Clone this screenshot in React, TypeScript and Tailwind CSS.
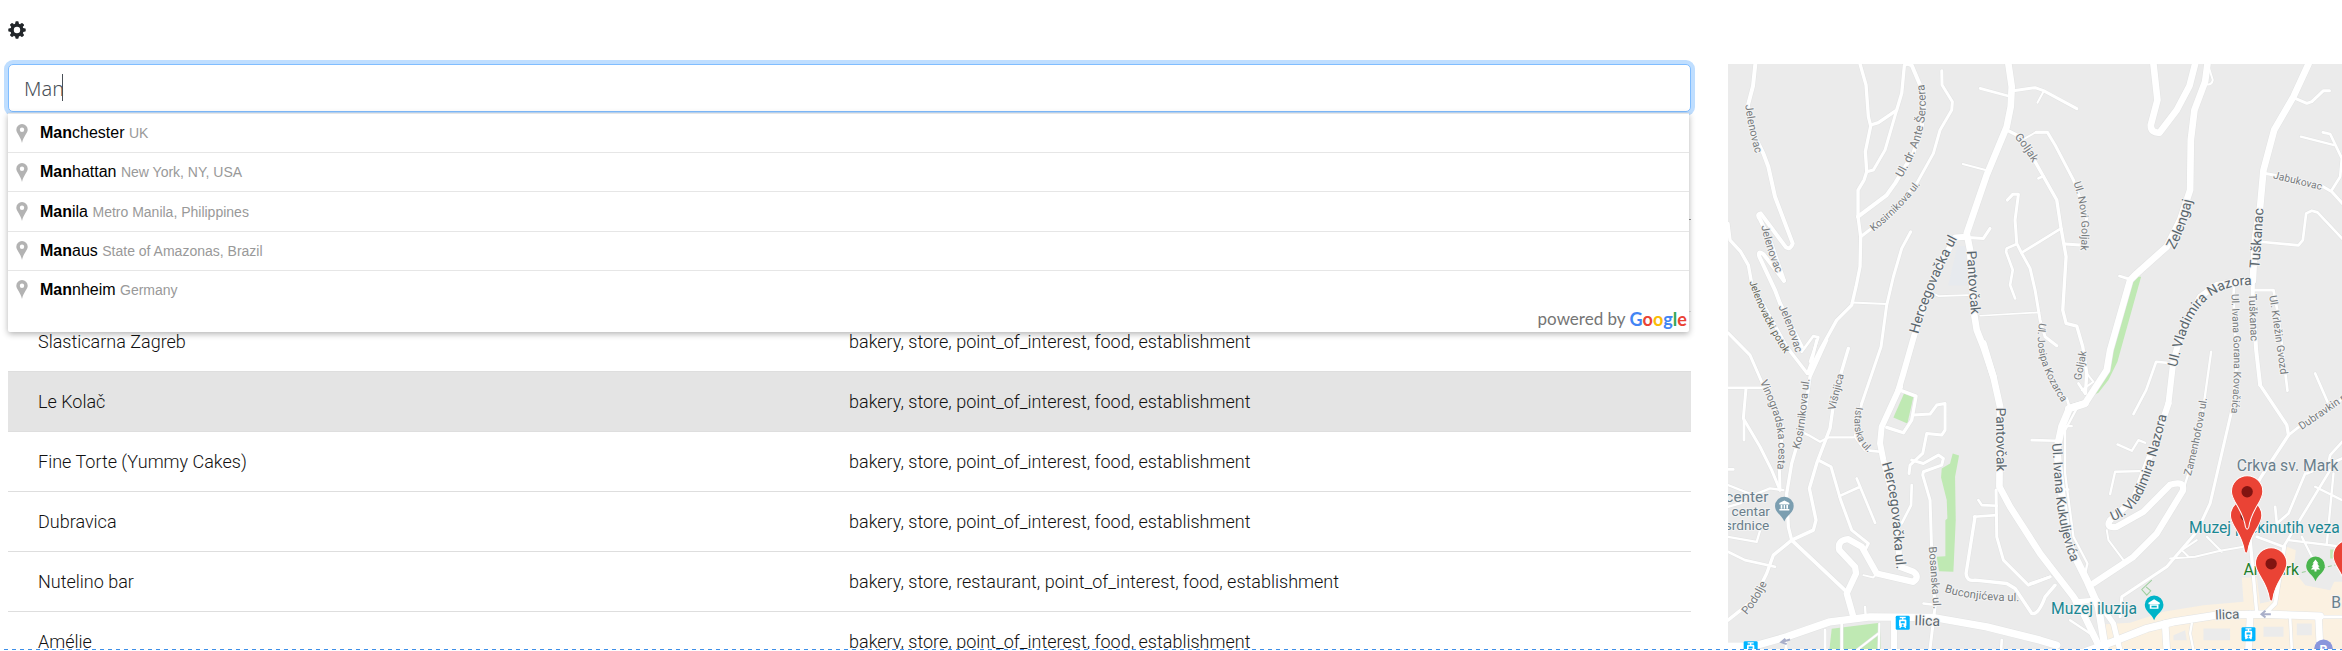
import React from "react";

type Prediction = { main: string; rest: string };

const query = "Man";

const predictions: Prediction[] = [
  { main: "Manchester", rest: "UK" },
  { main: "Manhattan", rest: "New York, NY, USA" },
  { main: "Manila", rest: "Metro Manila, Philippines" },
  { main: "Manaus", rest: "State of Amazonas, Brazil" },
  { main: "Mannheim", rest: "Germany" },
];

type Place = { name: string; types: string; hovered?: boolean };

const places: Place[] = [
  { name: "Slasticarna Zagreb", types: "bakery, store, point_of_interest, food, establishment" },
  { name: "Le Kolač", types: "bakery, store, point_of_interest, food, establishment", hovered: true },
  { name: "Fine Torte (Yummy Cakes)", types: "bakery, store, point_of_interest, food, establishment" },
  { name: "Dubravica", types: "bakery, store, point_of_interest, food, establishment" },
  { name: "Nutelino bar", types: "bakery, store, restaurant, point_of_interest, food, establishment" },
  { name: "Amélie", types: "bakery, store, point_of_interest, food, establishment" },
];

const cogAngles = [0, 45, 90, 135, 180, 225, 270, 315];

function CogIcon() {
  return (
    <svg viewBox="-9 -9 18 18" className="size-[18px]" aria-hidden="true">
      <circle r="4.900" className="fill-none stroke-[#212529]" strokeWidth="3.400" />
      {cogAngles.map((angle) => (
        <path
          key={angle}
          transform={`rotate(${angle})`}
          className="fill-[#212529]"
          d="M-2 -6L-1.500 -8.300Q-1.400 -8.700 -1 -8.700H1Q1.400 -8.700 1.500 -8.300L2 -6Z"
        />
      ))}
    </svg>
  );
}

function PlaceIcon() {
  return (
    <svg viewBox="0 0 12 19" className="h-[19px] w-3 shrink-0 fill-[#b3b3b3]" aria-hidden="true">
      <path fillRule="evenodd" d="M6 0a5.7 5.7 0 0 1 5.7 5.7C11.700 9 7.500 12 6 19 4.500 12 .3 9 .3 5.700A5.700 5.700 0 0 1 6 0Zm0 3.500a2.200 2.200 0 1 0 0 4.400 2.200 2.200 0 0 0 0-4.400Z" />
    </svg>
  );
}

function Suggestions() {
  return (
    <div className="absolute left-0 right-[2px] top-[49px] z-10 rounded-b-[2px] bg-white font-['Liberation_Sans',Arial,sans-serif] shadow-[0_2px_6px_rgba(0,0,0,0.3)]">
      <ul className="flex h-[196px] flex-col">
        {predictions.map((p) => (
          <li key={p.main} className="flex flex-1 items-center border-t border-[#e6e6e6] pl-2">
            <PlaceIcon />
            <span className="ml-3 whitespace-nowrap text-[16px] leading-5 text-black">
              <b>{query}</b>
              {p.main.slice(query.length)} <span className="text-[14px] text-[#999]">{p.rest}</span>
            </span>
          </li>
        ))}
      </ul>
      <div className="flex h-[23px] items-center justify-end gap-1 pb-1 pr-[2px] font-[Lato,sans-serif] text-[17px] leading-4">
        <span className="text-[#757575]">powered by</span>
        <span className="text-[18px] font-bold">
          <span className="text-[#4285f4]">G</span>
          <span className="text-[#ea4335]">o</span>
          <span className="text-[#fbbc05]">o</span>
          <span className="text-[#4285f4]">g</span>
          <span className="text-[#34a853]">l</span>
          <span className="text-[#ea4335]">e</span>
        </span>
      </div>
    </div>
  );
}

type Tile = 0 | 1 | 2 | 3;
const tileOffset: Record<Tile, string> = {
  0: "translate(0 0)",
  1: "translate(930 0)",
  2: "translate(0 870)",
  3: "translate(930 870)",
};

type Road = [Tile, number, string];

const roads: Road[] = [
  [0, 12, "M106 42L99 108L84 165L95 240L130 310L145 350L165 440L218 580Q212 600 198 592L122 490Q108 492 120 508L150 570L192 692"],
  [0, 12, "M192 692L130 612Q112 600 118 620L165 720L180 760L245 890"],
  [0, 10, "M24 520L30 570L62 605L85 645L95 700L200 890L262 970"],
  [0, 10, "M420 42L438 105L445 200L452 228L436 305L440 365L432 390L414 420L414 500L422 560L420 650L408 710L395 765L350 810L300 900L265 970"],
  [0, 10, "M562 42L553 46L545 130L530 180L475 218L452 225"],
  [0, 9, "M530 180L495 300L460 360L440 365"],
  [0, 12, "M565 42L575 46L600 105L612 160L605 230L580 310L525 400L500 435L414 500"],
  [0, 9, "M665 62L666 105L697 155L695 180L660 240L640 310L590 400L500 500L422 560"],
  [0, 20, "M865 42L875 110L872 170L860 230L800 375L740 550L750 600L762 790L770 840L790 890L820 980"],
  [0, 18, "M740 560L705 562L690 590L640 690L590 830L550 970L535 1020"],
  [0, 8, "M780 115L865 138"],
  [0, 9, "M880 122L945 113L970 122L1070 176"],
  [0, 6, "M970 125L952 158"],
  [0, 6, "M728 342L805 362"],
  [0, 9, "M745 562L790 565L810 535"],
  [0, 10, "M860 240L890 255L945 335L1010 450L1023 535L1038 620L1028 780L1038 820L1070 828L1088 890L1100 970L1096 1030"],
  [0, 9, "M862 450L878 433L895 433L885 510L890 580L905 610L930 655L945 720L960 810L975 860L1010 887"],
  [0, 8, "M890 582L860 595L858 605L878 660L870 705L885 745"],
  [0, 8, "M905 608L1023 535"],
  [0, 9, "M572 545L545 595L520 680L500 765L483 890L425 1060"],
  [0, 6, "M395 757L500 762"],
  [0, 5, "M640 730L655 738L745 735"],
  [0, 5, "M780 797L958 787"],
  [0, 8, "M245 905L280 858L295 862L270 935"],
  [0, 6, "M905 270L945 248L982 247"],
  [1, 9, "M18 247L52 247L75 285L130 390L170 500L160 575L150 585L105 582"],
  [1, 8, "M25 385L40 378"],
  [1, 20, "M370 42L382 150L362 225Q362 250 388 248L440 180L478 108L495 42"],
  [1, 20, "M532 42L525 95L493 180L482 270L480 420L450 510L410 590L320 670L300 690L240 900L230 960L165 1060L115 1075"],
  [1, 6, "M536 52L548 90Q545 105 530 103"],
  [1, 8, "M268 678L300 688"],
  [1, 20, "M835 42L790 140L732 240L700 360L690 470L675 560L668 692"],
  [1, 9, "M795 145L830 160L845 155L880 122L898 122"],
  [1, 7, "M812 260L912 285"],
  [1, 8, "M878 247L900 252L935 325L930 380L905 420"],
  [1, 9, "M705 370L730 375L870 405L905 425L950 475"],
  [1, 8, "M690 575L805 586L818 570L828 490L845 482L862 487L945 575"],
  [1, 18, "M668 692L620 694L560 705L510 740L460 830L430 930L415 1060"],
  [1, 12, "M668 690L668 730L678 900L690 1005"],
  [1, 8, "M675 720L730 720L745 800L772 1022"],
  [1, 8, "M612 700L610 740L620 950L605 1080"],
  [2, 9, "M24 -22L90 45L125 125L188 260L178 380L180 450"],
  [2, 8, "M24 143L130 143"],
  [2, 9, "M78 145L70 235L120 320L155 390L180 450"],
  [2, 8, "M72 240L72 300"],
  [2, 10, "M320 0L270 110L250 250L215 370L200 460L205 560L215 600"],
  [2, 9, "M290 0L275 65L262 100"],
  [2, 10, "M385 25L345 160L330 265L290 370L268 445L288 540L280 570L215 600L160 645L140 700L100 780L24 840"],
  [2, 7, "M235 270L265 285L300 305L325 292L400 292"],
  [2, 8, "M425 190L405 290L435 330L480 335"],
  [2, 9, "M295 360L333 380L362 480L395 570L445 610L435 630"],
  [2, 8, "M358 468L420 440M410 415L465 548"],
  [2, 11, "M215 600L380 755"],
  [2, 19, "M400 830L380 760L408 700L405 680L358 630Q350 600 385 597L425 620L470 700L580 725Q600 710 580 695L540 680"],
  [2, 6, "M430 705L460 712L470 700"],
  [2, 18, "M540 140L485 260L480 310L490 360L525 500L540 680"],
  [2, 10, "M540 150L588 168L575 240L550 278L500 262"],
  [2, 9, "M580 225L630 222L650 195L675 190L675 270L665 285L620 280L608 340L570 375L567 400"],
  [2, 9, "M575 360L610 370L655 345L670 355L665 375L610 395L608 405L630 480L635 640L645 800L630 925"],
  [2, 8, "M575 435L573 495L545 550"],
  [2, 20, "M790 10L820 110L840 200L838 440L870 500L960 640L1060 770L1080 800L1140 925"],
  [2, 8, "M935 300L1010 302M775 480L785 495L830 497M762 530L830 525"],
  [2, 9, "M828 450L830 590L850 660L925 735L990 710"],
  [2, 10, "M765 530L738 700Q740 725 765 720L860 730L885 745L935 820Q955 825 975 770L1005 735"],
  [2, 7, "M610 790L650 795M435 800L437 830"],
  [2, 8, "M845 900L843 930M365 850L365 930M315 870L315 930M198 905L198 930"],
  [2, 18, "M522 840L522 930"],
  [2, 6, "M475 880L410 930M478 850L476 930"],
  [2, 8, "M24 635L75 660L165 680M24 388L40 388"],
  [2, 7, "M24 435L100 465L150 445L190 450M24 590L110 605L125 555M24 500L60 490L90 470"],
  [2, 22, "M24 918L100 918L200 890L330 845L450 830L640 832L800 860L960 900L1010 915"],
  [3, 8, "M310 222L348 150L378 65L410 68"],
  [3, 7, "M262 313L305 332L325 300L345 308M240 462L255 395L330 393"],
  [3, 19, "M415 190L385 280L340 400L310 480L240 540Q225 565 260 560L340 515L420 434Q465 420 458 452L380 580L310 650L190 730"],
  [3, 7, "M543 35L520 200L475 400L462 440"],
  [3, 9, "M605 210L540 490L500 575L410 680L275 770L270 830"],
  [3, 6, "M420 655L495 650L570 632L640 620M530 590L575 635M500 600L455 630L475 650"],
  [3, 10, "M690 135L770 255L775 285L690 415L660 470L660 600L680 820"],
  [3, 8, "M775 285L800 265L940 175M855 100L892 185"],
  [3, 22, "M165 190L118 205L95 260L80 330L95 460L115 610L170 720L205 800L225 925"],
  [3, 7, "M140 205L105 270L105 400L130 590L172 670L165 700M105 258L125 258M95 448L115 448"],
  [3, 8, "M110 175L118 200M145 130L165 160"],
  [3, 6, "M170 100L190 125L155 150"],
  [3, 16, "M135 785L200 780L250 850L268 925"],
  [3, 8, "M0 730L60 710"],
  [3, 7, "M120 840L180 880L205 920M485 850L480 880L490 930"],
  [3, 6, "M230 570L235 600L280 660"],
  [3, 8, "M680 590L760 620L900 390M825 400L775 520L740 550L735 500"],
  [3, 8, "M936 305L900 345L890 390M936 355L830 400"],
  [3, 7, "M855 440L936 480M910 400L890 610M775 600L936 620M815 590L845 650"],
  [3, 12, "M710 815L735 790L750 700L762 620"],
  [3, 20, "M405 850L410 930M660 822L655 930M865 830L870 930"],
  [3, 8, "M780 835L785 930M870 830L936 830"],
  [3, 22, "M150 940L240 908L350 865L430 845L560 825L700 822L870 828"],
];

const minor = "fill-[#777b7e]";
const major = "fill-[#5a666d]";

type Label = [Tile, string, string, number, string];

const labels: Label[] = [
  [0, "Jelenovac", "M76 165Q84 240 112 330", 33, minor],
  [0, "Jelenovac", "M124 528Q138 600 177 690", 33, minor],
  [0, "Jelenovac", "M175 770Q205 830 230 920", 33, minor],
  [0, "Jelenovački potok", "M88 695Q120 800 205 930", 30, "fill-[#606357]"],
  [0, "Ul. dr. Ante Šercera", "M546 384C600 290 635 200 608 80", 35, minor],
  [0, "Kosirnikova ul.", "M460 545Q550 475 610 390", 31, minor],
  [0, "Goljak", "M882 262Q910 290 950 360", 34, minor],
  [0, "Hercegovačka ul", "M595 852Q630 720 720 550", 42, major],
  [0, "Pantovčak", "M740 603Q745 700 755 820", 41, major],
  [1, "Ul. Novi Goljak", "M130 398Q165 500 150 610", 32, minor],
  [1, "Zelengaj", "M432 600Q472 530 492 420", 42, major],
  [1, "Tuškanac", "M687 655Q695 560 702 450", 42, major],
  [1, "Jabukovac", "M728 385L890 424", 31, minor],
  [1, "Ul. Vladimira Nazora", "M440 952C465 850 490 700 670 705", 41, major],
  [1, "Ul. Ivana Gorana Kovačića", "M604 732C606 850 622 960 598 1130", 31, minor],
  [1, "Tuškanac", "M656 732L664 920", 33, minor],
  [1, "Ul. Krležin Gvozd", "M717 738Q735 850 756 1010", 32, minor],
  [1, "Ul. Josipa Kozarca", "M28 818C10 900 40 980 115 1085", 31, minor],
  [2, "Vinogradska cesta", "M120 125C150 200 195 260 166 420", 33, minor],
  [2, "Kosirnikova ul.", "M238 328C262 250 255 190 274 85", 33, minor],
  [2, "Višnjica", "M345 212L374 92", 32, minor],
  [2, "Istarska ul.", "M408 200C396 270 405 310 460 350", 31, minor],
  [2, "Hercegovačka ul.", "M485 370C520 470 515 570 534 730", 42, major],
  [2, "Pantovčak", "M828 203L830 420", 41, major],
  [2, "Bosanska ul.", "M626 620L642 830", 33, minor],
  [2, "Buconjićeva ul.", "M673 755Q760 785 920 783", 34, minor],
  [2, "Podolje", "M80 825Q120 780 146 718", 34, minor],
  [2, "Ilica", "M583 855L690 859", 42, major],
  [3, "Goljak", "M153 122L172 20", 32, minor],
  [3, "Zamenhofova ul.", "M482 408Q512 300 532 165", 32, minor],
  [3, "Ul. Ivana Kukuljevića", "M66 310C75 430 72 560 145 720", 40, major],
  [3, "Ul. Vladimira Nazora", "M248 543C350 510 370 380 424 170", 41, major],
  [3, "Dubravkin put", "M815 270L990 150", 32, minor],
  [3, "Ilica", "M555 838L660 834", 40, major],
];

function Pin({ x, y }: { x: number; y: number }) {
  return (
    <g transform={`translate(${x} ${y})`}>
      <path
        className="fill-[#ea4335] stroke-white"
        strokeWidth="3"
        d="M0 -48A47 47 0 0 1 47 0C47 30 12 52 5 106Q0 118 -5 106C-12 52 -47 30 -47 0A47 47 0 0 1 0 -48Z"
      />
      <circle r="17" className="fill-[#811411]" />
    </g>
  );
}

function Tram({ x, y }: { x: number; y: number }) {
  return (
    <g transform={`translate(${x} ${y})`}>
      <rect x="-21" y="-21" width="42" height="42" rx="4" className="fill-[#00b5ff]" />
      <path className="fill-none stroke-white" strokeWidth="4" d="M-9 -16H9M0 -16V-9M-9 15L-5 10M9 15L5 10" />
      <path
        className="fill-white"
        fillRule="evenodd"
        d="M-8 -10H8Q11 -10 11 -6V8Q11 12 7 12H-7Q-11 12 -11 8V-6Q-11 -10 -8 -10ZM-6 -5V1H6V-5ZM0 4a3 3 0 1 0 .1 0Z"
      />
    </g>
  );
}

function Poi({ x, y, color, children }: { x: number; y: number; color: string; children: React.ReactNode }) {
  return (
    <g transform={`translate(${x} ${y})`}>
      <path className={color} d="M0 -28A28 28 0 0 1 28 0C28 20 8 26 0 46C-8 26 -28 20 -28 0A28 28 0 0 1 0 -28Z" />
      {children}
    </g>
  );
}

function MapPane() {
  return (
    <svg
      viewBox="24 42 1842 1755"
      preserveAspectRatio="xMinYMin slice"
      className="block h-[585px] w-full bg-[#ebebeb] font-[Roboto,sans-serif]"
      role="img"
      aria-label="Map"
    >
      <g className="fill-[#fbf1e1]">
        <path
          transform={tileOffset[3]}
          d="M635 712L680 712L690 790L735 780L770 620L797 630L790 690L825 735L900 750L912 725L936 725V930H235L225 852L300 848L400 815L520 795L640 785Z"
        />
      </g>
      <g transform={tileOffset[3]} className="fill-[#ebebeb]">
        <path d="M430 885L465 870L470 900H430ZM520 865H600V900H520ZM800 850H845V885H800ZM700 860H760V890H700Z" />
      </g>
      <path className="fill-[#e7eaee]" d="M712 588H736L744 706H684Z" />
      <g className="fill-[#bfe9b3]">
        <path transform={tileOffset[1]} d="M312 680L333 680L280 870L262 935L235 990L205 1028L180 1040L225 975L248 900Z" />
        <path transform={tileOffset[2]} d="M552 160L580 170L562 250L520 232Z" />
        <path
          transform={tileOffset[2]}
          d="M698 340L717 346L705 410L707 540L700 695L657 693L650 650L676 648L676 540L682 535L680 480L663 412L665 385L690 370Z"
        />
        <path transform={tileOffset[2]} d="M335 866L480 848L482 930H328Z" />
        <path transform={tileOffset[3]} d="M900 628H936V655H900Z" />
      </g>
      <g className="fill-none stroke-[#e2e3e3]" strokeLinecap="round" strokeLinejoin="round">
        {roads.map(([tile, width, d], i) => (
          <path key={i} transform={tileOffset[tile]} strokeWidth={width + 3} d={d} />
        ))}
      </g>
      <g className="fill-none stroke-white" strokeLinecap="round" strokeLinejoin="round">
        {roads.map(([tile, width, d], i) => (
          <path key={i} transform={tileOffset[tile]} strokeWidth={width} d={d} />
        ))}
      </g>
      <g transform={tileOffset[3]} className="fill-none stroke-[#9ccf9c]" strokeWidth="3">
        <path d="M365 720L335 748L350 765L362 752L348 740" />
        <path strokeDasharray="12 8" d="M815 697L936 670" />
      </g>
      <g className="fill-none stroke-[#a9afc9]" strokeWidth="6">
        <path transform={tileOffset[2]} d="M210 898L185 906M196 896L184 906L200 912" />
        <path transform={tileOffset[3]} d="M722 822L694 822M706 812L694 822L706 832" />
      </g>
      <g className="stroke-[#f3f3f3]" strokeWidth="6" strokeLinejoin="round" style={{ paintOrder: "stroke" }}>
        {labels.map(([tile, text, d, size, color], i) => (
          <g key={i} transform={tileOffset[tile]}>
            <path id={`street-${i}`} d={d} className="fill-none stroke-none" />
            <text fontSize={size} className={color}>
              <textPath href={`#street-${i}`}>{text}</textPath>
            </text>
          </g>
        ))}
        <g transform={tileOffset[2]} className="fill-[#6a7f8c]" fontSize="41" textAnchor="end">
          <text x="145" y="485" fontSize="46">center</text>
          <text x="150" y="528">centar</text>
          <text x="148" y="570">srdnice</text>
        </g>
        <g transform={tileOffset[3]} fontSize="47">
          <text x="620" y="394" className="fill-[#6a7f8c]">Crkva sv. Mark</text>
          <text x="477" y="580" className="fill-[#1b8793]">Muzej prekinutih veza</text>
          <text x="640" y="706" className="fill-[#1f7f2b]">Art park</text>
          <text x="63" y="823" className="fill-[#1b8793]">Muzej iluzija</text>
          <text x="903" y="805" className="fill-[#6a7f8c]">B</text>
        </g>
      </g>
      <g transform={tileOffset[2]}>
        <Poi x={193} y={498} color="fill-[#7b9eb0]">
          <path className="fill-white" d="M0 -17L15 -9V-5H-15V-9ZM-11 -3H-6V8H-11ZM-2 -3H2V8H-2ZM6 -3H11V8H6ZM-15 9H15V13H-15Z" />
        </Poi>
        <Tram x={548} y={848} />
        <Tram x={92} y={924} />
      </g>
      <g transform={tileOffset[3]}>
        <Poi x={372} y={794} color="fill-[#00b4c8]">
          <path className="fill-white" fillRule="evenodd" d="M0 -17L17 -6V-2H-17V-6ZM-13 -1H13V12H-13ZM-8 3V8H8V3Z" />
        </Poi>
        <Poi x={856} y={677} color="fill-[#4ab54d]">
          <path className="fill-white" d="M0 -19L9 -7H5L12 3H7L14 11H3V17H-3V11H-14L-7 3H-12L-5 -7H-9Z" />
        </Poi>
        <Tram x={655} y={882} />
        <circle cx="880" cy="926" r="28" className="fill-[#8a96dc]" />
        <text x="868" y="942" fontSize="36" className="fill-white font-bold">P</text>
        <Pin x={648} y={527} />
        <Pin x={651} y={455} />
        <Pin x={723} y={671} />
        <Pin x={956} y={648} />
      </g>
    </svg>
  );
}

export default function App() {
  return (
    <div className="h-screen overflow-hidden bg-white">
      <main className="relative h-[calc(100vh-1px)] overflow-hidden pl-2 font-[Roboto,sans-serif] text-[#212529]">
        <header className="flex h-16 items-start pt-[21px]">
          <button type="button" aria-label="Settings">
            <CogIcon />
          </button>
        </header>
        <div className="grid grid-cols-[2.740fr_1fr] gap-[37px]">
          <section className="min-w-0">
            <div className="relative">
              <input
                type="text"
                aria-label="Search location"
                defaultValue={query}
                className="block h-12 w-full rounded-[5px] border border-[#80bdff] bg-white px-[15px] font-['Noto_Sans',sans-serif] text-[20px] font-light text-[#495057] shadow-[0_0_0_4px_#bfdeff] outline-none"
              />
              <span className="absolute left-[54px] top-[10px] h-[27px] w-px bg-[#495057]" />
              <Suggestions />
            </div>
            <input
              type="text"
              aria-label="Filter"
              className="mt-16 block h-11 w-full border-b border-[#949494] outline-none"
            />
            <table className="mt-9 w-full table-fixed border-collapse text-left text-[18px] font-light text-[#111111]">
              <thead>
                <tr className="h-[55px] border-b border-[#e0e0e0]">
                  <th aria-label="Name" className="w-[817px]" />
                  <th aria-label="Types" />
                </tr>
              </thead>
              <tbody>
                {places.map((p) => (
                  <tr
                    key={p.name}
                    className={p.hovered ? "h-[60px] border-b border-t border-b-[#dedede] border-t-[#c8c8c8] bg-[#e4e4e4]" : "h-[60px] border-b border-[#dedede]"}
                  >
                    <td className="pl-[30px]">{p.name}</td>
                    <td className="pl-6">{p.types}</td>
                  </tr>
                ))}
              </tbody>
            </table>
          </section>
          <aside className="min-w-0">
            <MapPane />
          </aside>
        </div>
        <div className="absolute bottom-0 left-1 right-0 h-px bg-[repeating-linear-gradient(90deg,#3d8fe8_0_4px,#ffffff_4px_8px)]" />
      </main>
    </div>
  );
}
